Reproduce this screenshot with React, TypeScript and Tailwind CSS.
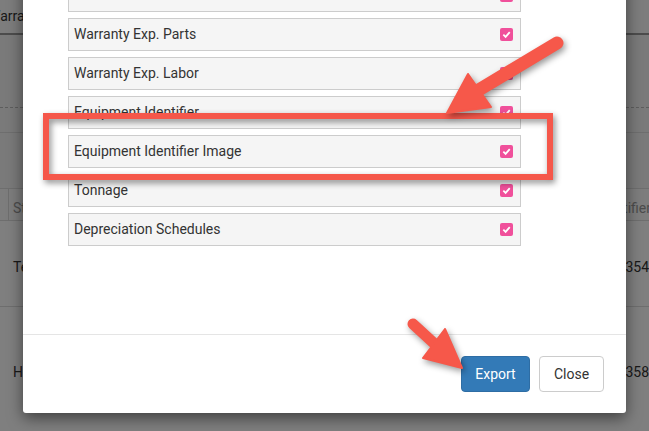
import React from 'react';

const fields = [
  'Date In Service',
  'Warranty Exp. Parts',
  'Warranty Exp. Labor',
  'Equipment Identifier',
  'Equipment Identifier Image',
  'Tonnage',
  'Depreciation Schedules',
];

function Check() {
  return (
    <span className="flex h-[13px] w-[13px] items-center justify-center rounded-[2px] bg-[#f0509b]">
      <svg width="9" height="9" viewBox="0 0 10 10">
        <path d="M1.5 5.2 L4 7.6 L8.6 2.4" fill="none" stroke="#fff" strokeWidth="2" />
      </svg>
    </span>
  );
}

export default function App() {
  return (
    <div className="relative h-[431px] w-[649px] overflow-hidden bg-white font-['Roboto',sans-serif] text-[14px] text-[#333]">
      {/* page behind the dialog */}
      <div className="flex flex-col">
        <div className="flex h-[35px] items-center border-b-2 border-[#999] bg-[#fafafa] -ml-[12px]">
          <span>Warranty Exp. Parts</span>
        </div>
        <div className="h-[73px] border-b border-dashed border-[#bbb] bg-[#f4f4f4]"></div>
        <div className="h-[25px] border-b border-[#ddd] bg-[#f4f4f4]"></div>
        <div className="h-[56px] border-b border-[#ddd] bg-[#f4f4f4]"></div>
        <div className="flex h-[32px] border-b border-[#ddd] bg-[#fafafa] pt-[8px] text-[#999]">
          <div className="-mt-[8px] w-[9px] border-r border-[#ddd]"></div>
          <div className="flex flex-1 items-center pl-[4px]">Status</div>
          <div className="-mr-[2px] flex items-center">Equipment Identifier</div>
        </div>
        <div className="flex h-[86px] items-center justify-between border-b border-[#ddd] pl-[13px] pt-[8px]">
          <span>Test</span>
          <span>10354</span>
        </div>
        <div className="flex h-[124px] items-start justify-between pl-[13px] pt-[55px]">
          <span>Heat</span>
          <span>10358</span>
        </div>
      </div>

      <div className="absolute inset-0 bg-black/50"></div>

      {/* export dialog */}
      <div className="absolute left-[23px] top-[-40px] w-[603px] rounded-[3px] bg-white shadow-[0_5px_15px_rgba(0,0,0,0.5)]">
        <div className="flex flex-col gap-[6px] pb-[88px] pl-[45px] pt-[19px]">
          {fields.map((f) => (
            <div
              key={f}
              className="flex h-[33px] w-[453px] items-center justify-between border border-[#ccc] bg-[#f5f5f5] pl-[5px] pr-[7px]"
            >
              <span>{f}</span>
              <Check />
            </div>
          ))}
        </div>
        <div className="flex justify-end gap-[9px] border-t border-[#e5e5e5] px-[22px] py-[21px]">
          <button className="h-[36px] w-[69px] rounded-[4px] border border-[#2e6da4] bg-[#337ab7] text-white">
            Export
          </button>
          <button className="h-[36px] w-[65px] rounded-[4px] border border-[#ccc] bg-white text-[#333]">
            Close
          </button>
        </div>
      </div>

      {/* annotations */}
      <div className="absolute left-[43px] top-[113px] h-[67px] w-[510px] border-[6px] border-[#f5574a] [filter:drop-shadow(2px_3px_3px_rgba(0,0,0,0.45))]"></div>
      <svg
        className="pointer-events-none absolute left-0 top-0 [filter:drop-shadow(2px_3px_3px_rgba(0,0,0,0.4))]"
        width="649"
        height="431"
      >
        <g fill="#f6584a" stroke="#f6584a" strokeLinejoin="round">
          <line x1="557" y1="43" x2="472" y2="94" strokeWidth="13" strokeLinecap="round" />
          <polygon points="447,113 468,74 491,107" strokeWidth="2" />
          <line x1="413" y1="324" x2="438" y2="347" strokeWidth="11" strokeLinecap="round" />
          <polygon points="462,368 445,329 423,358" strokeWidth="2" />
        </g>
      </svg>
    </div>
  );
}
